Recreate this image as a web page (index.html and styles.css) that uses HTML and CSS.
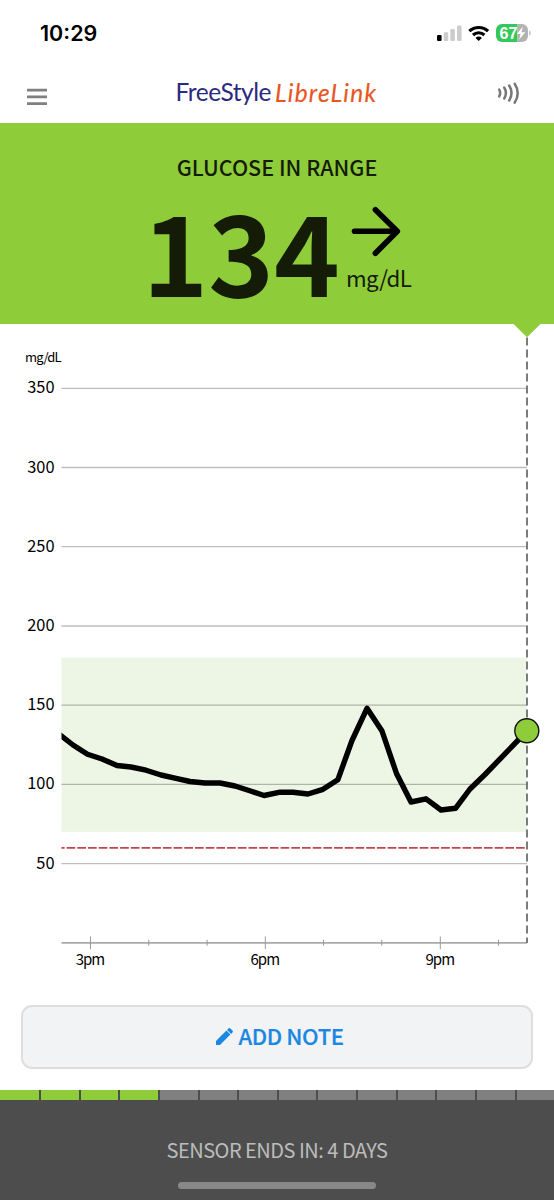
FILE: index.html
```html
<!DOCTYPE html>
<html lang="en">
<head>
<meta charset="utf-8">
<meta name="viewport" content="width=device-width, initial-scale=1">
<title>FreeStyle LibreLink</title>
<link rel="stylesheet" href="styles.css">
</head>
<body>
<div class="app">
  <div class="status">
    <span class="time">10:29</span>
    <svg class="status-icons" width="96" height="20" viewBox="436 23 96 20">
      <rect x="437" y="35" width="4.6" height="6" rx="1.2" fill="#000"/>
      <g fill="#ccc">
        <rect x="443.7" y="32.300" width="4.6" height="8.700" rx="1.200"/>
        <rect x="450.300" y="29" width="4.600" height="12" rx="1.200"/>
        <rect x="457" y="25.600" width="4.600" height="15.400" rx="1.200"/>
      </g>
      <g fill="none" stroke="#000" stroke-width="3.100">
        <path d="M469.300 31.200a13.600 13.600 0 0 1 18.800 0"/>
        <path d="M473 35a8.300 8.300 0 0 1 11.400 0"/>
      </g>
      <path d="M478.700 41l-3.200-3.100a4.600 4.600 0 0 1 6.400 0z"/>
      <path d="M502 24h15.500v18H502a6 6 0 0 1-6-6v-6a6 6 0 0 1 6-6z" fill="#34c759"/>
      <path d="M517.500 24h4.500a6 6 0 0 1 6 6v6a6 6 0 0 1-6 6h-4.500z" fill="#b3b3b3"/>
      <path d="M529.300 30.500c1.800.5 1.800 4.500 0 5z" fill="#b3b3b3"/>
      <text class="charge" x="499.500" y="38.600" textLength="17.800">67</text>
      <path d="M522.800 26.700l-6 7.200h3.700l-1.300 5.700 6-7.400h-3.700z" fill="#fff"/>
    </svg>
  </div>
  <header class="bar">
    <svg class="menu" width="20" height="18" viewBox="0 0 20 18" fill="#808080"><path d="M0 .8h20v2.700H0zM0 7.500h20v2.700H0zM0 14.200h20v2.700H0z"/></svg>
    <svg class="logo" width="212" height="40" viewBox="173 74 212 40">
      <text class="free" x="175.500" y="101" textLength="96">FreeStyle</text>
      <text class="libre" x="275" y="101.500" textLength="101">LibreLink</text>
    </svg>
    <svg class="nfc" width="24" height="26" viewBox="496 80 24 26" fill="none" stroke="#777" stroke-width="2.500" stroke-linecap="round">
      <path d="M499.200 89.500q2 3.500 0 7"/><path d="M504.200 87.500q3.400 5.500 0 11"/><path d="M509.200 85.500q4.600 7.500 0 15"/><path d="M514.700 83.700q6 9.500 0 19"/>
    </svg>
  </header>
  <section class="reading">
    <h1 class="state">GLUCOSE IN RANGE</h1>
    <div class="value-row">
      <span class="value">134</span>
      <div class="side">
        <svg width="50" height="52" viewBox="0 0 50 52" fill="none" stroke="#000" stroke-width="5.600" stroke-linecap="round" stroke-linejoin="round"><path d="M3.500 26.200H46M24.400 4.700L46.300 26.200 24.400 48.200"/></svg>
        <span class="unit">mg/dL</span>
      </div>
    </div>
  </section>
  <svg class="chart" width="554" height="681" viewBox="0 324 554 681">
    <rect x="61.500" y="657.600" width="465.500" height="174.200" fill="#edf5e5"/>
    <g stroke="#000" stroke-opacity=".26" stroke-width="1.300">
      <path d="M61.500 388.300H527M61.500 467.500H527M61.500 546.700H527M61.500 626H527M61.500 705.200H527M61.500 784.400H527M61.500 863.600H527"/>
    </g>
    <path d="M61.500 942.900H527" stroke="#aaa" stroke-width="1.700"/>
    <path d="M90.500 936.500v12.700M265.300 936.500v12.700M440.300 936.500v12.700M148.800 939.700v6M207.100 939.700v6M323.500 939.700v6M381.800 939.700v6M498.500 939.700v6" stroke="#999" stroke-width="1"/>
    <path d="M61.500 847.800H527" stroke="#c4454c" stroke-width="1.700" stroke-dasharray="8.700 2" stroke-dashoffset="5.600"/>
    <path d="M527 337.500V943" stroke="#666" stroke-width="1.700" stroke-dasharray="8 4"/>
    <path d="M513.500 324h27L527 337.300z" fill="#8fcc3a"/>
    <clipPath id="plot"><path d="M61.500 650H540v200H61.500z"/></clipPath>
    <path clip-path="url(#plot)" d="M59 734L73 745 87.500 754.300 102 759 117 765.500 131 767 146 770.200 161 775 176 778.300 190 781.500 205 783 220 783 235 786 249 790.500 264 795.500 279 792.300 293 792.300 308 794 323 789.300 337.800 779.800 352 740.500 367 708.300 382 731 396.500 773.500 411 802 426 798.800 441 810 455.500 808.300 470 789 485 774.500 527 731" fill="none" stroke="#000" stroke-width="5.400" stroke-linejoin="round"/>
    <circle cx="526.800" cy="730.800" r="12" fill="#8fcc3a" stroke="#111" stroke-width="1.400"/>
    <g class="label">
      <text class="small" x="25" y="362" textLength="36.500">mg/dL</text>
      <g text-anchor="end">
        <text x="54.500" y="393.300">350</text><text x="54.500" y="472.500">300</text><text x="54.500" y="551.800">250</text><text x="54.500" y="631">200</text><text x="54.500" y="710.100">150</text><text x="54.500" y="789.300">100</text><text x="54.500" y="868.600">50</text>
      </g>
      <g class="hours" text-anchor="middle"><text x="90.500" y="964.500" textLength="29.500">3pm</text><text x="265.300" y="964.500" textLength="29.500">6pm</text><text x="440.300" y="964.500" textLength="29.500">9pm</text></g>
    </g>
  </svg>
  <button class="note">
    <svg width="17" height="17" viewBox="0 0 17 17" fill="#1a87e0"><path d="M0 13L10.400 2.600l4 4L4 17H0zM11.100 1.900L12.400.6q1-1 2 0l2 2q1 1 0 2L15.100 5.900z"/></svg>
    <span>ADD NOTE</span>
  </button>
  <footer class="sensor">
    <div class="days"><i class="on"></i><i class="on"></i><i class="on"></i><i class="on"></i><i></i><i></i><i></i><i></i><i></i><i></i><i></i><i></i><i></i><i></i></div>
    <p class="ends">SENSOR ENDS IN: 4 DAYS</p>
    <div class="home"></div>
  </footer>
</div>
</body>
</html>
```
FILE: styles.css
```css
* { box-sizing: border-box; margin: 0; padding: 0; }
body { background: #fff; font-family: "Noto Sans CJK SC", "Noto Sans", sans-serif; }
.app { width: 554px; height: 1200px; display: flex; flex-direction: column; overflow: hidden; }
svg { display: block; flex: none; }
.status { height: 66px; display: flex; justify-content: space-between; padding: 23px 22px 0 40px; }
.time { font: 600 21.5px/21px Inter, sans-serif; }
.charge { font: 700 16px "Liberation Sans", sans-serif; fill: #fff; }
.bar { height: 57.3px; display: flex; padding: 12px 0 0 27px; }
.menu { margin-top: 10px; }
.logo { margin: -4px 111px 0 126px; }
.nfc { margin-top: 2px; }
.free { font: 400 24.5px Lato, sans-serif; fill: #2c2a80; }
.libre { font: italic 400 24.5px Lato, sans-serif; fill: #e8561f; stroke: #e8561f; stroke-width: .15px; }
.reading { height: 200.700px; background: #8fcc3a; color: #141c08; padding-top: 29px; }
.state { font-size: 21.5px; font-weight: 500; line-height: 30px; text-align: center; }
.value-row { display: flex; padding-left: 142.500px; }
.value { width: 203.500px; font-size: 111.5px; font-weight: 700; line-height: 110px; padding-top: 11.500px; }
.side { padding-top: 23px; }
.side svg { margin-left: 5px; }
.unit { display: block; font-size: 22.3px; line-height: 30px; margin-top: 5px; letter-spacing: -.6px; }
.chart { font-family: "Noto Sans CJK SC", sans-serif; }
.label { font-size: 16.4px; fill: #000; }
.small { font-size: 13px; }
.hours { font-size: 15px; }
.note { width: 512px; height: 64px; margin: 0 0 21px 21px; padding: 0 0 3px 5px; flex: none; display: flex; align-items: center; justify-content: center; gap: 6px; border: 2px solid #dedede; border-radius: 11px; background: #f2f3f5; color: #1a87e0; font: 500 22px/30px "Noto Sans CJK SC", sans-serif; letter-spacing: -.4px; -webkit-text-stroke: .2px; }
.note svg { margin-top: 2px; }
.sensor { height: 110px; background: #4d4d4d; display: flex; flex-direction: column; align-items: center; }
.days { width: 100%; height: 10px; display: grid; grid-template-columns: 39px repeat(12, 37.650px) 1fr; gap: 2px; }
.days i { background: #808080; }
.days .on { background: #8fcc3a; }
.ends { margin-top: 35px; font-size: 20px; line-height: 30px; letter-spacing: -.5px; color: #bcbcbc; }
.home { width: 198px; height: 7px; margin-top: 17.500px; border-radius: 4px; background: #888; }
```
